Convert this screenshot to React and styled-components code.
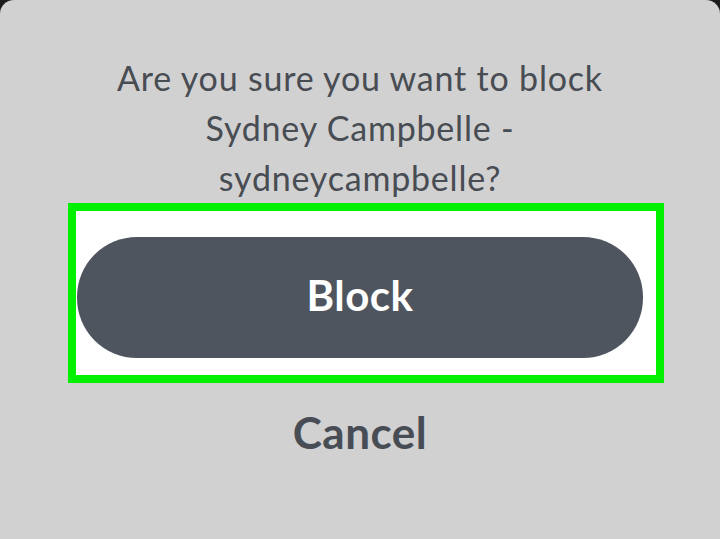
import React from "react";
import styled, { createGlobalStyle } from "styled-components";

const GlobalStyle = createGlobalStyle`
  html, body {
    margin: 0;
    padding: 0;
    height: 100%;
    background: #1c1c1c;
  }
  #root {
    height: 100%;
  }
`;

const Sheet = styled.section`
  height: 100vh;
  box-sizing: border-box;
  background: #d1d1d1;
  border-radius: 14px 14px 0 0;
  display: flex;
  flex-direction: column;
  align-items: center;
  padding-top: 53px;
  font-family: Lato, "Noto Sans", sans-serif;
  color: #484c53;
`;

const Message = styled.p`
  margin: 0;
  width: 580px;
  text-align: center;
  font-size: 34px;
  line-height: 50px;
  letter-spacing: 0.8px;
`;

const Highlight = styled.div`
  align-self: flex-start;
  margin-left: 68px;
  width: 596px;
  height: 180px;
  box-sizing: border-box;
  border: 8px solid #00f000;
  background: #ffffff;
  padding: 26px 13px 17px 1px;
  display: flex;
`;

const PillButton = styled.button`
  flex: 1;
  border: none;
  border-radius: 60px;
  background: #4f555e;
  color: #ffffff;
  font-family: inherit;
  font-weight: 700;
  font-size: 42px;
  letter-spacing: 0.5px;
  padding: 0 0 6px;
  cursor: pointer;
`;

const TextButton = styled.button`
  margin-top: 24px;
  border: none;
  background: none;
  padding: 0;
  color: #484d55;
  font-family: inherit;
  font-weight: 700;
  font-size: 44px;
  line-height: 50px;
  letter-spacing: 0.5px;
  cursor: pointer;
`;

export default function App() {
  return (
    <>
      <GlobalStyle />
      <Sheet>
        <Message>
          Are you sure you want to block
          <br />
          Sydney Campbelle -
          <br />
          sydneycampbelle?
        </Message>
        <Highlight>
          <PillButton>Block</PillButton>
        </Highlight>
        <TextButton>Cancel</TextButton>
      </Sheet>
    </>
  );
}
